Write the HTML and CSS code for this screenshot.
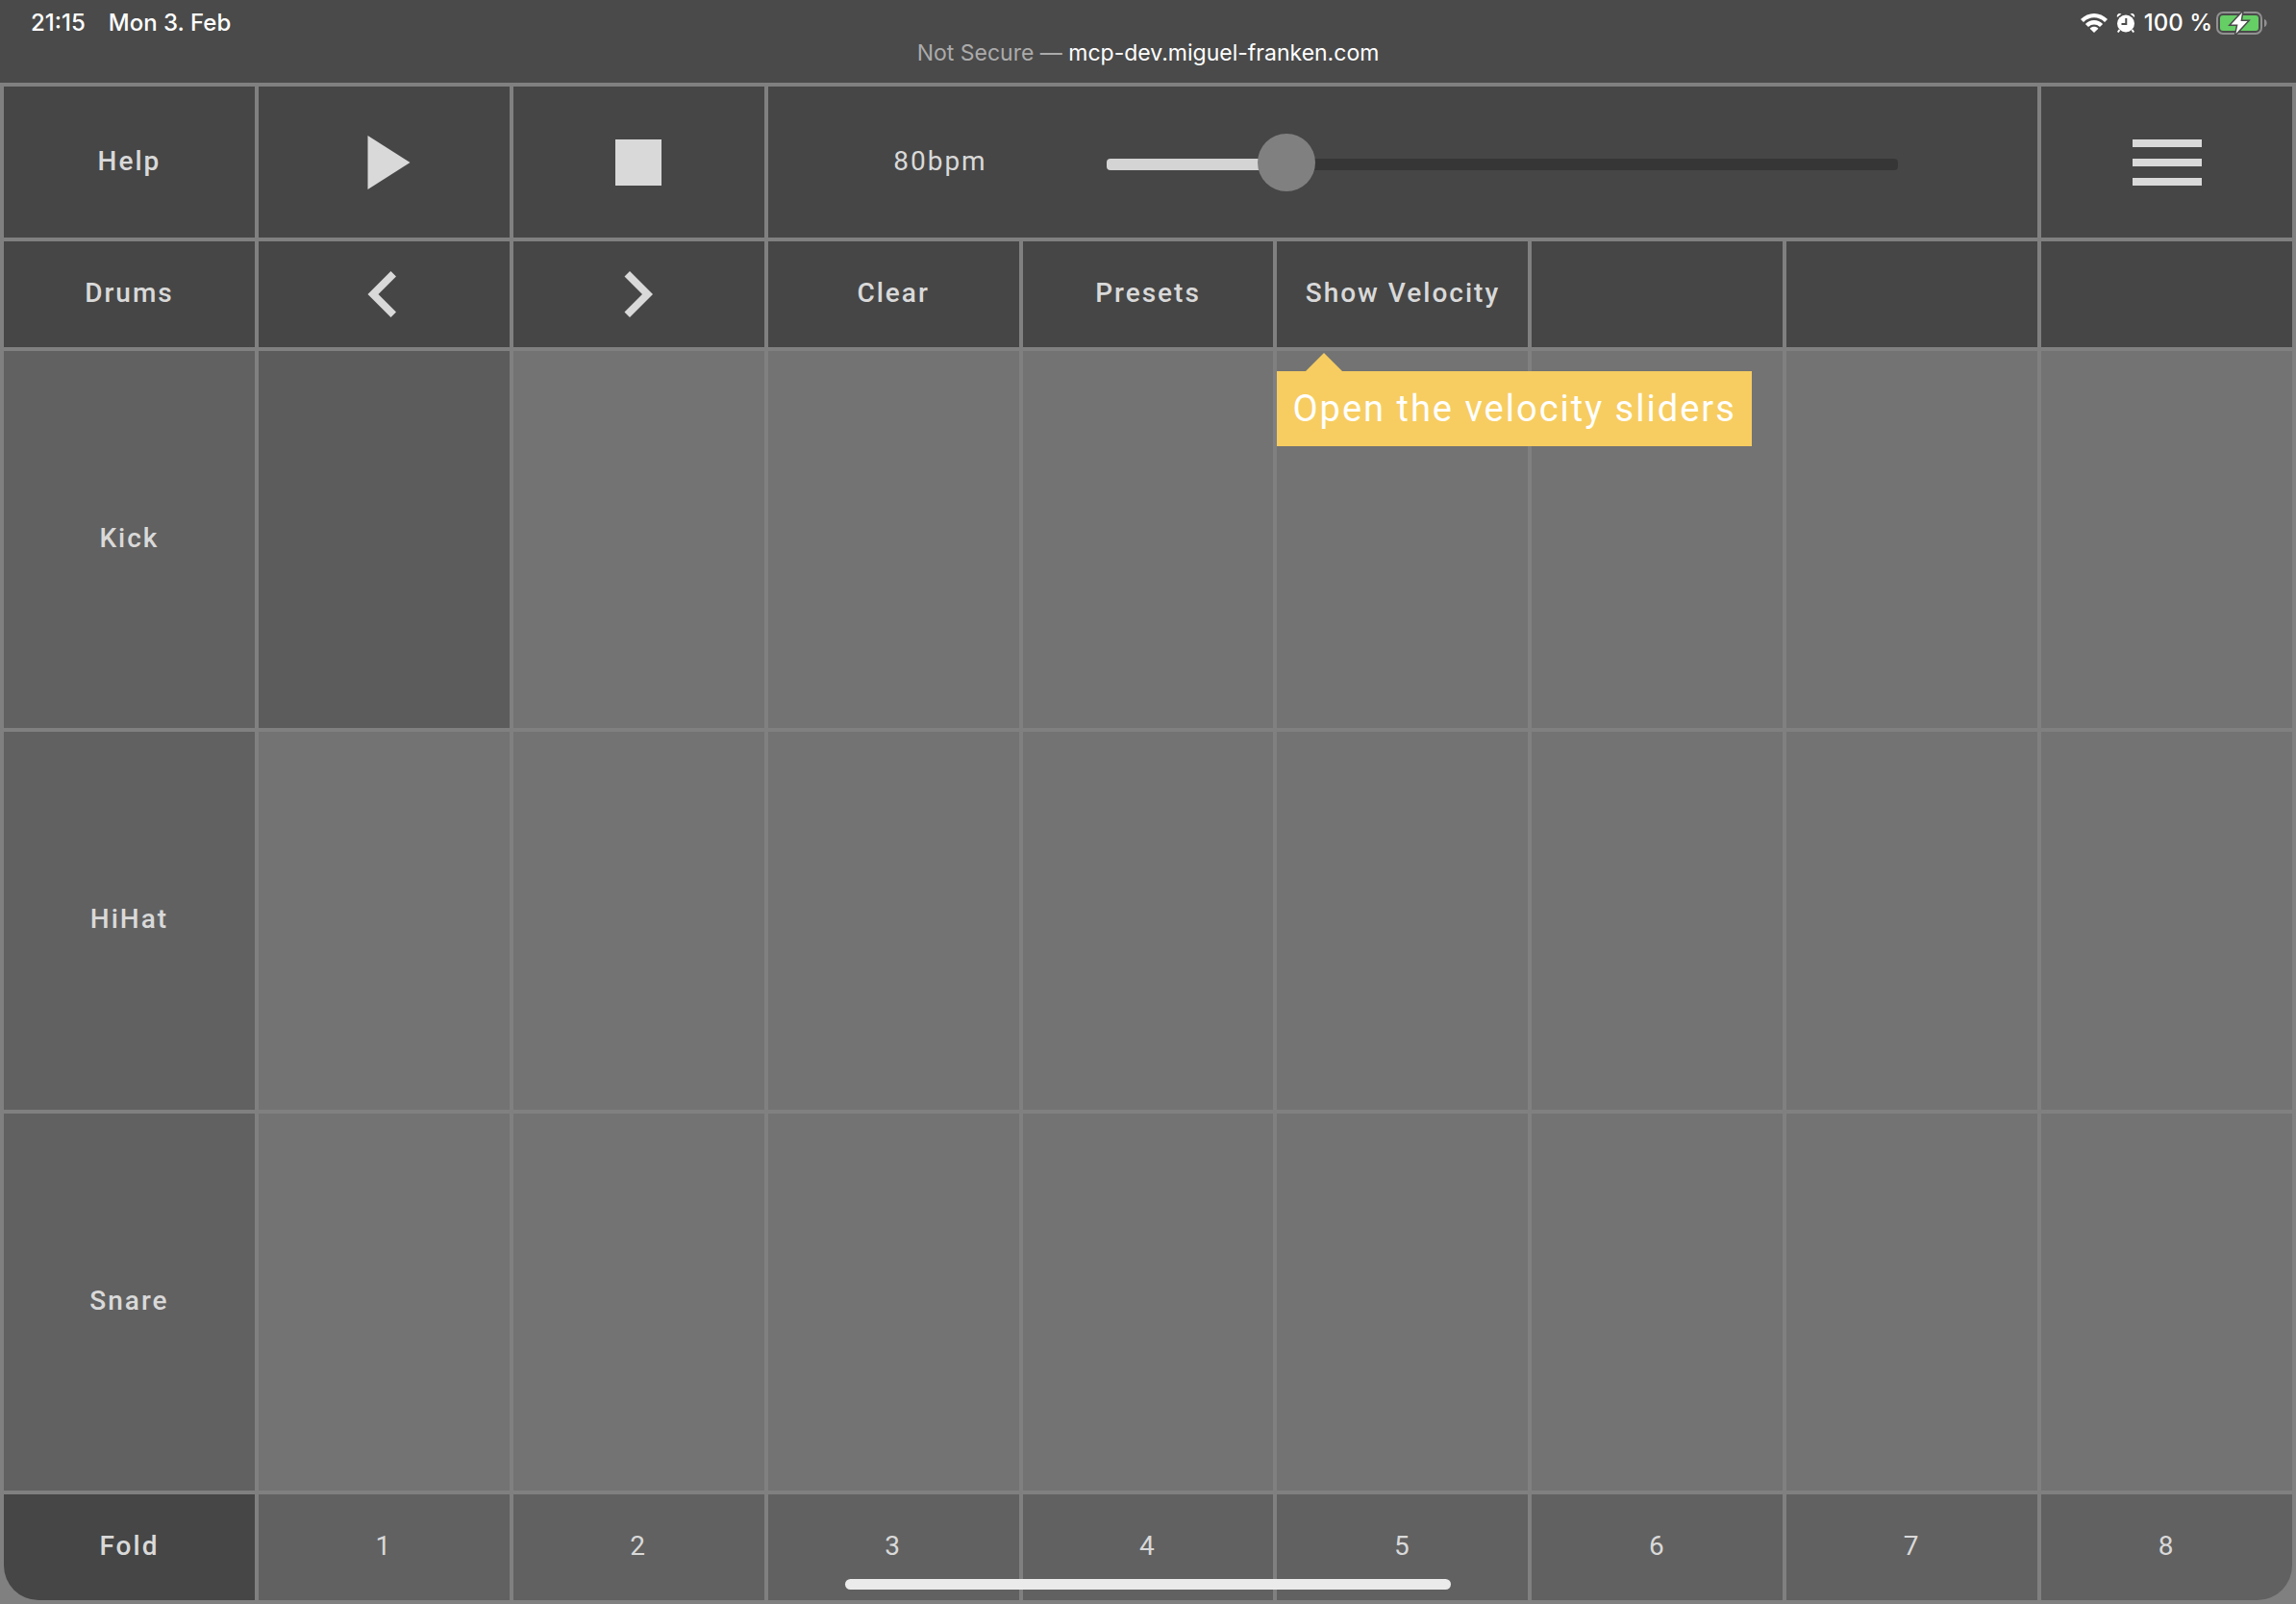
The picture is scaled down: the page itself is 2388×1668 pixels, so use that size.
FILE: index.html
```
<!DOCTYPE html>
<html lang="en">
<head>
  <meta charset="utf-8">
  <meta name="viewport" content="width=device-width, initial-scale=1">
  <title>Drum Sequencer</title>
  <link rel="stylesheet" href="styles.css">
</head>
<body>
  <header class="status-bar">
    <div class="status-row">
      <div class="status-group status-clock">
        <span>21:15</span>
        <span>Mon 3. Feb</span>
      </div>
      <div class="status-group">
        <svg class="wifi" viewBox="0 0 28 20" width="28" height="20" aria-hidden="true">
          <path d="M0 6 C8 -2 20 -2 28 6 L25 9 C18.500 2.800 9.500 2.800 3 9 Z"/>
          <path d="M4.900 11 C10 5.800 18 5.800 23.100 11 L20 14 C16.500 10.700 11.500 10.700 8 14 Z"/>
          <path d="M9.600 15.800 C12 13.200 16 13.200 18.400 15.800 L14 20 Z"/>
        </svg>
        <svg class="alarm" viewBox="0 0 20 22" width="20" height="22" aria-hidden="true">
          <circle cx="10" cy="11.500" r="9"/>
          <path d="M1 5 C0 2 3 0 5.500 1.600 Z M19 5 C20 2 17 0 14.500 1.600 Z"/>
          <path d="M3.500 18 L1.800 20.500 M16.500 18 L18.200 20.500" class="alarm-foot"/>
          <path d="M10.300 6 V12 H5.500" class="alarm-hand"/>
        </svg>
        <span>100 %</span>
        <svg class="battery" viewBox="0 0 53 24" width="53" height="24" aria-hidden="true">
          <rect x="1" y="1" width="46" height="22" rx="6" class="battery-case"/>
          <path d="M50 8 C53.500 9 53.500 15 50 16 Z" class="battery-nub"/>
          <rect x="4" y="4" width="40" height="16" rx="3" class="battery-fill"/>
          <path d="M27 1 L15.500 13.500 H22.500 L20.500 23 L32.500 10 H25.500 Z" class="battery-bolt"/>
        </svg>
      </div>
    </div>
    <p class="address"><span class="address-note">Not Secure —</span> mcp-dev.miguel-franken.com</p>
  </header>

  <main class="sequencer">
    <button class="cell control" type="button">Help</button>
    <button class="cell control" type="button" aria-label="Play">
      <svg viewBox="0 0 56 56" width="56" height="56" aria-hidden="true"><path d="M11.500 0 L55.500 28 L11.500 56 Z"/></svg>
    </button>
    <button class="cell control" type="button" aria-label="Stop">
      <svg viewBox="0 0 48 48" width="48" height="48" aria-hidden="true"><path d="M0 0 H48 V48 H0 Z"/></svg>
    </button>
    <div class="cell control tempo">
      <label class="tempo-label" for="tempo">80bpm</label>
      <input class="tempo-slider" id="tempo" type="range" min="45" max="215" value="80">
    </div>
    <button class="cell control" type="button" aria-label="Menu">
      <svg viewBox="0 0 72 48" width="72" height="48" aria-hidden="true"><path d="M0 0 H72 V8 H0 Z M0 20 H72 V28 H0 Z M0 40 H72 V48 H0 Z"/></svg>
    </button>

    <button class="cell control" type="button">Drums</button>
    <button class="cell control" type="button" aria-label="Previous">
      <svg viewBox="0 0 48 48" width="48" height="48" aria-hidden="true"><path d="M31.500 0 L37 5.500 L18.500 24 L37 42.500 L31.500 48 L7.500 24 Z"/></svg>
    </button>
    <button class="cell control" type="button" aria-label="Next">
      <svg viewBox="0 0 48 48" width="48" height="48" aria-hidden="true"><path d="M15 0 L9.500 5.500 L28 24 L9.500 42.500 L15 48 L39 24 Z"/></svg>
    </button>
    <button class="cell control" type="button">Clear</button>
    <button class="cell control" type="button">Presets</button>
    <div class="hint-anchor">
      <button class="cell control" type="button" aria-describedby="velocity-hint">Show Velocity</button>
      <div class="hint" id="velocity-hint" role="tooltip">Open the velocity sliders</div>
    </div>
    <div class="cell control"></div>
    <div class="cell control"></div>
    <div class="cell control"></div>

    <button class="cell track" type="button">Kick</button>
    <button class="cell pad current" type="button" aria-label="Kick 1"></button>
    <button class="cell pad" type="button" aria-label="Kick 2"></button>
    <button class="cell pad" type="button" aria-label="Kick 3"></button>
    <button class="cell pad" type="button" aria-label="Kick 4"></button>
    <button class="cell pad" type="button" aria-label="Kick 5"></button>
    <button class="cell pad" type="button" aria-label="Kick 6"></button>
    <button class="cell pad" type="button" aria-label="Kick 7"></button>
    <button class="cell pad" type="button" aria-label="Kick 8"></button>

    <button class="cell track" type="button">HiHat</button>
    <button class="cell pad" type="button" aria-label="HiHat 1"></button>
    <button class="cell pad" type="button" aria-label="HiHat 2"></button>
    <button class="cell pad" type="button" aria-label="HiHat 3"></button>
    <button class="cell pad" type="button" aria-label="HiHat 4"></button>
    <button class="cell pad" type="button" aria-label="HiHat 5"></button>
    <button class="cell pad" type="button" aria-label="HiHat 6"></button>
    <button class="cell pad" type="button" aria-label="HiHat 7"></button>
    <button class="cell pad" type="button" aria-label="HiHat 8"></button>

    <button class="cell track" type="button">Snare</button>
    <button class="cell pad" type="button" aria-label="Snare 1"></button>
    <button class="cell pad" type="button" aria-label="Snare 2"></button>
    <button class="cell pad" type="button" aria-label="Snare 3"></button>
    <button class="cell pad" type="button" aria-label="Snare 4"></button>
    <button class="cell pad" type="button" aria-label="Snare 5"></button>
    <button class="cell pad" type="button" aria-label="Snare 6"></button>
    <button class="cell pad" type="button" aria-label="Snare 7"></button>
    <button class="cell pad" type="button" aria-label="Snare 8"></button>

    <button class="cell control corner-left" type="button">Fold</button>
    <div class="cell step">1</div>
    <div class="cell step">2</div>
    <div class="cell step">3</div>
    <div class="cell step">4</div>
    <div class="cell step">5</div>
    <div class="cell step">6</div>
    <div class="cell step">7</div>
    <div class="cell step corner-right">8</div>
  </main>
  <div class="home-indicator"></div>
</body>
</html>
```
FILE: styles.css
```
* {
  box-sizing: border-box;
}

body {
  position: relative;
  display: flex;
  flex-direction: column;
  min-height: 100vh;
  margin: 0;
  background: #808080;
  color: #d9d9d9;
  font-family: Roboto, sans-serif;
}

/* Status bar */

.status-bar {
  height: 86px;
  padding: 8px 30px 0;
  background: #4a4a4a;
  color: #fff;
  font-family: Inter, sans-serif;
  line-height: 32px;
}

.status-row,
.status-group {
  display: flex;
  align-items: center;
}

.status-row {
  justify-content: space-between;
  font-size: 24px;
  font-weight: 500;
}

.status-group {
  gap: 4px;
}

.status-clock {
  gap: 24px;
  padding-left: 2px;
}

.wifi,
.alarm {
  margin-right: 5px;
  fill: #fff;
}

.alarm-foot {
  fill: none;
  stroke: #fff;
  stroke-width: 2;
}

.alarm-hand {
  fill: none;
  stroke: #4a4a4a;
  stroke-width: 2;
}

.battery-case {
  fill: none;
  stroke: #919191;
  stroke-width: 2;
}

.battery-nub {
  fill: #919191;
}

.battery-fill {
  fill: #65ce65;
}

.battery-bolt {
  fill: #fff;
  stroke: #4a4a4a;
  stroke-width: 3;
  paint-order: stroke;
}

.address {
  margin: 0;
  text-align: center;
  font-size: 23px;
  line-height: 30px;
}

.address-note {
  color: #ababab;
}

/* Grid of controls, pads and steps */

.sequencer {
  flex: 1;
  display: grid;
  grid-template-columns: repeat(9, minmax(0, 1fr));
  grid-template-rows: 157px 110px repeat(3, minmax(0, 1fr)) 110px;
  gap: 4px;
  padding: 4px;
}

.cell {
  display: flex;
  align-items: center;
  justify-content: center;
  min-width: 0;
  margin: 0;
  padding: 0 0 3px;
  border: 0;
  color: inherit;
  font-family: inherit;
  font-size: 28px;
  font-weight: 500;
  letter-spacing: 2px;
}

.cell svg {
  margin-bottom: -3px;
  fill: #d9d9d9;
}

.control {
  background: #464646;
}

.track {
  background: #616161;
}

.pad {
  background: #737373;
}

.current {
  background: #5c5c5c;
}

.step {
  background: #616161;
  font-weight: 400;
}

.corner-left {
  border-bottom-left-radius: 36px;
}

.corner-right {
  border-bottom-right-radius: 36px;
}

/* Tempo */

.tempo {
  grid-column: span 5;
  padding: 4px 11% 0 0;
  font-weight: 400;
}

.tempo-label {
  flex: 1;
  padding: 0 0 6px 6px;
  text-align: center;
}

.tempo-slider {
  appearance: none;
  width: 70%;
  height: 60px;
  margin: 0;
  background: none;
}

.tempo-slider::-webkit-slider-runnable-track {
  height: 12px;
  border-radius: 4px;
  background: linear-gradient(to right, #d4d4d4 23%, #363636 23%);
}

.tempo-slider::-webkit-slider-thumb {
  appearance: none;
  width: 60px;
  height: 60px;
  margin-top: -26px;
  border-radius: 50%;
  background: #808080;
}

/* Velocity hint */

.hint-anchor {
  position: relative;
  display: grid;
}

.hint {
  position: absolute;
  top: calc(100% + 25px);
  left: 0;
  z-index: 1;
  padding: 16px;
  background: #f7cd61;
  color: #fff;
  font-size: 38px;
  line-height: 46px;
  letter-spacing: 2px;
  white-space: nowrap;
}

.hint::before {
  content: "";
  position: absolute;
  bottom: 100%;
  left: 30px;
  border: 19px solid transparent;
  border-top: 0;
  border-bottom-color: #f7cd61;
}

.home-indicator {
  position: absolute;
  bottom: 15px;
  left: 50%;
  width: 630px;
  height: 11px;
  border-radius: 6px;
  background: #ebebeb;
  transform: translateX(-50%);
}
```
